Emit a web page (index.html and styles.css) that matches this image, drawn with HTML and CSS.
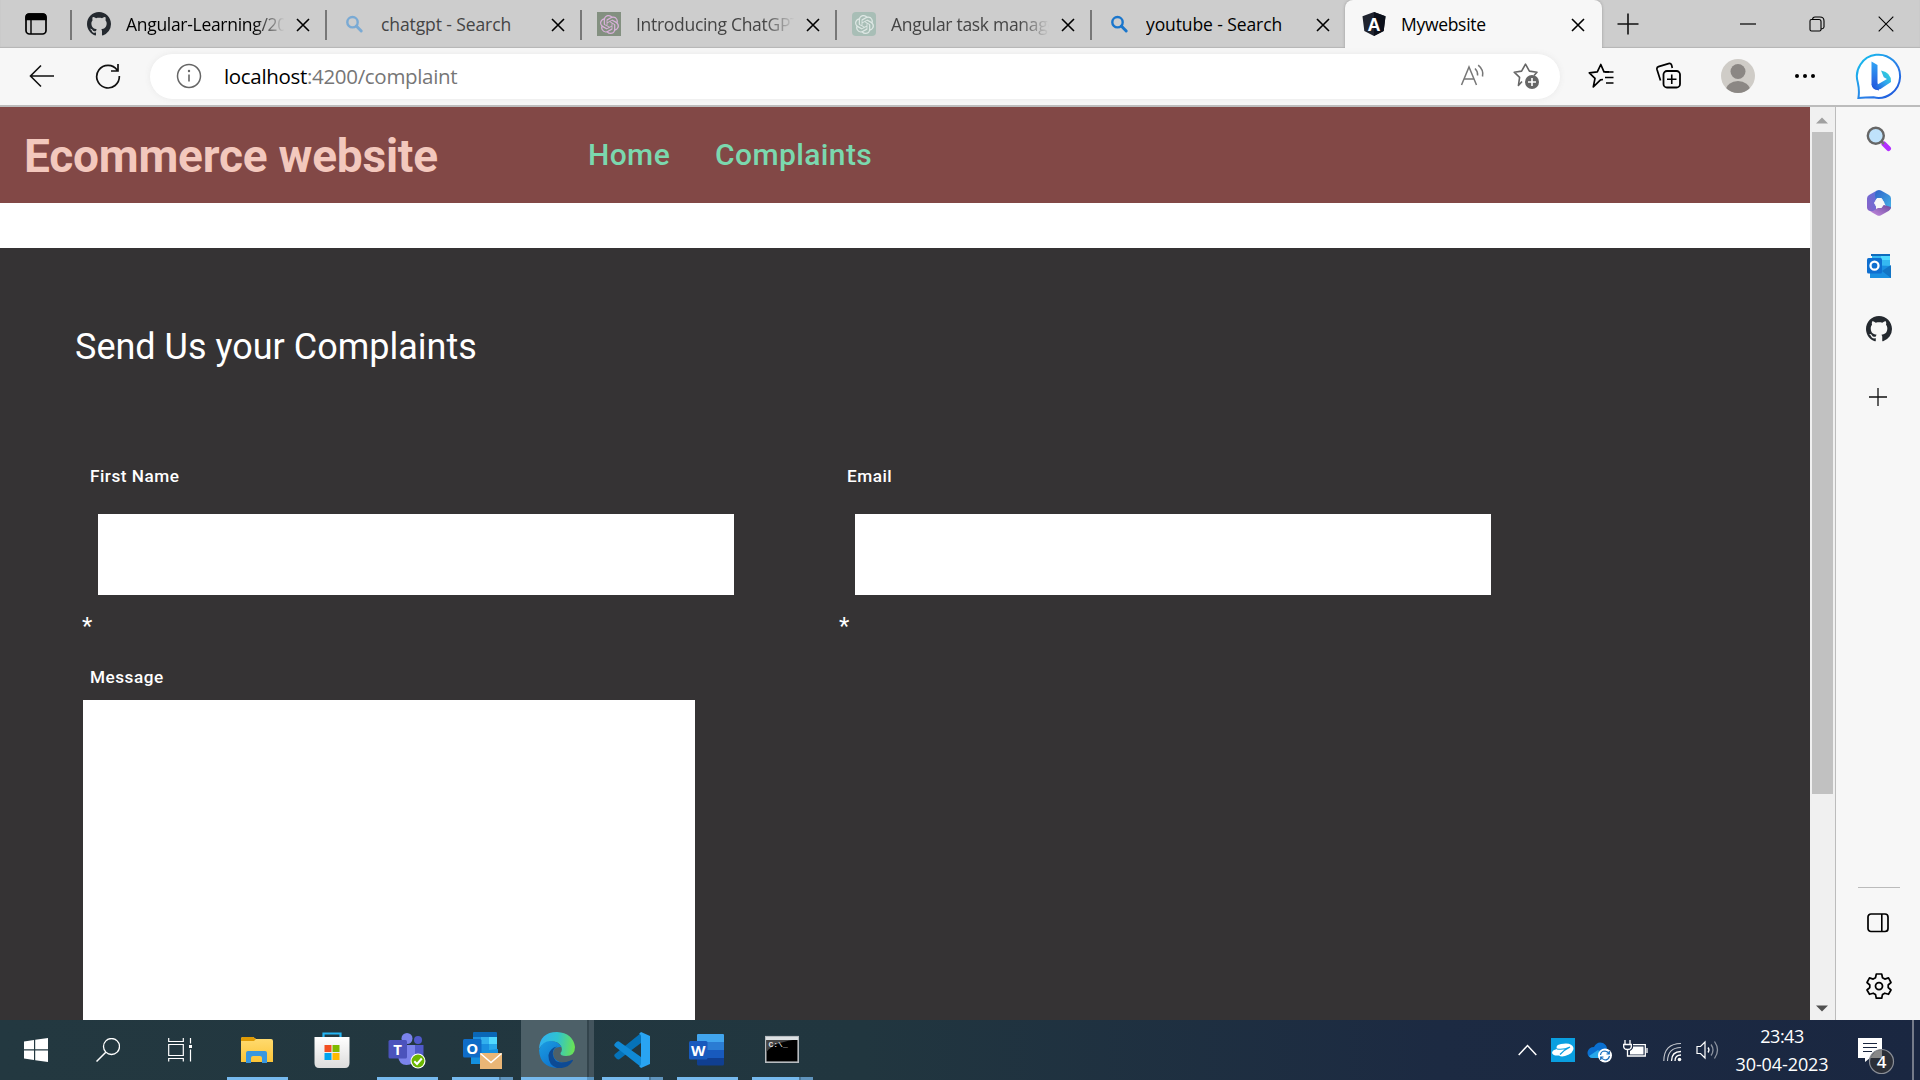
FILE: index.html
```html
<!DOCTYPE html>
<html lang="en">
<head>
<meta charset="utf-8">
<title>Mywebsite</title>
<link rel="stylesheet" href="styles.css">
</head>
<body>
<svg class="defs" width="0" height="0">
  <defs>
    <symbol id="x" viewBox="0 0 14 14"><path d="M1 1L13 13M13 1L1 13" fill="none" stroke="#000" stroke-width="1.6"/></symbol>
    <symbol id="github" viewBox="0 0 16 16"><path d="M8 0C3.58 0 0 3.58 0 8c0 3.54 2.29 6.53 5.47 7.59.4.07.55-.17.55-.38 0-.19-.01-.82-.01-1.49-2.01.37-2.53-.49-2.69-.94-.09-.23-.48-.94-.82-1.13-.28-.15-.68-.52-.01-.53.63-.01 1.08.58 1.23.82.72 1.21 1.87.87 2.33.66.07-.52.28-.87.51-1.07-1.78-.2-3.64-.89-3.64-3.95 0-.87.31-1.59.82-2.15-.08-.2-.36-1.02.08-2.12 0 0 .67-.21 2.2.82.64-.18 1.32-.27 2-.27s1.36.09 2 .27c1.53-1.04 2.2-.82 2.2-.82.44 1.1.16 1.92.08 2.12.51.56.82 1.27.82 2.15 0 3.07-1.87 3.75-3.65 3.95.29.25.54.73.54 1.48 0 1.07-.01 1.93-.01 2.2 0 .21.15.46.55.38A8.01 8.01 0 0 0 16 8c0-4.42-3.58-8-8-8z" fill="#24292f"/></symbol>
    <symbol id="openai" viewBox="0 0 24 24"><path d="M22.2819 9.8211a5.9847 5.9847 0 0 0-.5157-4.9108 6.0462 6.0462 0 0 0-6.5098-2.9A6.0651 6.0651 0 0 0 4.9807 4.1818a5.9847 5.9847 0 0 0-3.9977 2.9 6.0462 6.0462 0 0 0 .7427 7.0966 5.98 5.98 0 0 0 .511 4.9107 6.051 6.051 0 0 0 6.5146 2.9001A5.9847 5.9847 0 0 0 13.2599 24a6.0557 6.0557 0 0 0 5.7718-4.2058 5.9894 5.9894 0 0 0 3.9977-2.9001 6.0557 6.0557 0 0 0-.7475-7.0729zm-9.022 12.6081a4.4755 4.4755 0 0 1-2.8764-1.0408l.1419-.0804 4.7783-2.7582a.7948.7948 0 0 0 .3927-.6813v-6.7369l2.02 1.1686a.071.071 0 0 1 .038.052v5.5826a4.504 4.504 0 0 1-4.4945 4.4944zm-9.6607-4.1254a4.4708 4.4708 0 0 1-.5346-3.0137l.142.0852 4.783 2.7582a.7712.7712 0 0 0 .7806 0l5.8428-3.3685v2.3324a.0804.0804 0 0 1-.0332.0615L9.74 19.9502a4.4992 4.4992 0 0 1-6.1408-1.6464zM2.3408 7.8956a4.485 4.485 0 0 1 2.3655-1.9728V11.6a.7664.7664 0 0 0 .3879.6765l5.8144 3.3543-2.0201 1.1685a.0757.0757 0 0 1-.071 0l-4.8303-2.7865A4.504 4.504 0 0 1 2.3408 7.872zm16.5963 3.8558L13.1038 8.364 15.1192 7.2a.0757.0757 0 0 1 .071 0l4.8303 2.7913a4.4944 4.4944 0 0 1-.6765 8.1042v-5.6772a.79.79 0 0 0-.407-.667zm2.0107-3.0231l-.142-.0852-4.7735-2.7818a.7759.7759 0 0 0-.7854 0L9.409 9.2297V6.8974a.0662.0662 0 0 1 .0284-.0615l4.8303-2.7866a4.4992 4.4992 0 0 1 6.6802 4.66zM8.3065 12.863l-2.02-1.1638a.0804.0804 0 0 1-.038-.0567V6.0742a4.4992 4.4992 0 0 1 7.3757-3.4537l-.142.0805L8.704 5.459a.7948.7948 0 0 0-.3927.6813zm1.0976-2.3654l2.602-1.4998 2.6069 1.4998v2.9994l-2.5974 1.4997-2.6067-1.4997Z" fill="currentColor"/></symbol>
    <symbol id="lens" viewBox="0 0 24 24"><circle cx="10.5" cy="10.2" r="5.2" fill="none" stroke="currentColor" stroke-width="2.4"/><path d="M14.3 14L19.2 19" stroke="currentColor" stroke-width="3" stroke-linecap="round"/></symbol>
    <linearGradient id="bingRing" x1="0" y1="0" x2="1" y2="1"><stop offset="0" stop-color="#15c5ee"/><stop offset=".6" stop-color="#2b7de8"/><stop offset="1" stop-color="#1a4fd8"/></linearGradient>
    <linearGradient id="bingB" x1="0" y1="0" x2="0" y2="1"><stop offset="0" stop-color="#30a5f5"/><stop offset="1" stop-color="#2450dc"/></linearGradient>
    <linearGradient id="bingTail" x1="0" y1="1" x2="1" y2="0"><stop offset="0" stop-color="#1d45d6"/><stop offset=".55" stop-color="#30a8ee"/><stop offset="1" stop-color="#2fe0d0"/></linearGradient>
    <linearGradient id="mA" x1="0" y1="1" x2="1" y2="0"><stop offset="0" stop-color="#8b62c8"/><stop offset="1" stop-color="#5a72dc"/></linearGradient>
    <linearGradient id="mB" x1="0" y1="0" x2="1" y2="1"><stop offset="0" stop-color="#2f62c8"/><stop offset="1" stop-color="#46b5e8"/></linearGradient>
    <linearGradient id="mC" x1="0" y1="1" x2="1" y2="0"><stop offset="0" stop-color="#c78ce0"/><stop offset="1" stop-color="#6b4aa0"/></linearGradient>
    <linearGradient id="edgeTop" x1="0" y1=".4" x2="1" y2=".5"><stop offset="0" stop-color="#30b0f2"/><stop offset=".5" stop-color="#2fc3cf"/><stop offset="1" stop-color="#6be352"/></linearGradient>
    <linearGradient id="edgeLow" x1="0" y1="0" x2="1" y2="1"><stop offset="0" stop-color="#1b9de2"/><stop offset="1" stop-color="#0a63c4"/></linearGradient>
    <linearGradient id="folder" x1="0" y1="0" x2="0" y2="1"><stop offset="0" stop-color="#ffdc73"/><stop offset="1" stop-color="#fcc537"/></linearGradient>
    <linearGradient id="bag" x1="0" y1="0" x2="0" y2="1"><stop offset="0" stop-color="#fff"/><stop offset="1" stop-color="#dcdcdc"/></linearGradient>
  </defs>
</svg>

<header class="tabstrip">
  <div class="tab-actions">
    <svg width="22" height="22" viewBox="0 0 22 22"><rect x="1" y="1" width="20" height="20" rx="3.5" fill="none" stroke="#000" stroke-width="1.7"/><path d="M1 6.5V4Q1 1 4 1H18Q21 1 21 4V6.5ZM6 6V21" stroke="#000" stroke-width="1.4"/></svg>
  </div>
  <div class="tab"><svg class="fav"><use href="#github"/></svg><span class="title fade">Angular-Learning/20</span><svg class="close"><use href="#x"/></svg></div>
  <div class="tab dim"><svg class="fav pale"><use href="#lens"/></svg><span class="title wide">chatgpt - Search</span><svg class="close"><use href="#x"/></svg></div>
  <div class="tab dim"><span class="fav tile green"><svg width="19" height="19"><use href="#openai"/></svg></span><span class="title fade">Introducing ChatGPT</span><svg class="close"><use href="#x"/></svg></div>
  <div class="tab dim"><span class="fav tile mint"><svg width="19" height="19"><use href="#openai"/></svg></span><span class="title fade">Angular task manager</span><svg class="close"><use href="#x"/></svg></div>
  <div class="tab"><svg class="fav blue"><use href="#lens"/></svg><span class="title wide">youtube - Search</span><svg class="close"><use href="#x"/></svg></div>
  <div class="tab active"><svg class="fav" viewBox="0 0 24 24"><path d="M12 0L23.5 4.2L21.7 19L12 24L2.3 19L.5 4.2Z" fill="#20242f"/><path d="M12 0L23.5 4.2L21.7 19L12 24Z" fill="#0c101b"/><text class="ang" x="12" y="18.5" text-anchor="middle">A</text></svg><span class="title">Mywebsite</span><svg class="close"><use href="#x"/></svg></div>
  <svg class="newtab" width="22" height="22" viewBox="0 0 22 22"><path d="M11 .5V21.5M.5 11H21.5" stroke="#111" stroke-width="1.6"/></svg>
  <div class="winbtns">
    <svg width="16" height="16"><path d="M0 8H16" stroke="#000" stroke-width="1.2"/></svg>
    <svg width="16" height="16"><path d="M1 5Q1 3.5 2.5 3.5H10Q12 3.5 12 5.5V13.5Q12 15 10.5 15H2.5Q1 15 1 13.5ZM3.5 3.5Q3.7 1 6 1H11Q15 1 15 5V11Q15 12.5 12.5 13" fill="none" stroke="#000" stroke-width="1.1"/></svg>
    <svg width="16" height="16"><path d="M.7.7L15.3 15.3M15.3.7L.7 15.3" stroke="#000" stroke-width="1.1"/></svg>
  </div>
</header>

<div class="toolbar">
  <svg class="back" width="26" height="24" viewBox="0 0 26 24"><path d="M25 12H1.5M12 1.5L1.5 12L12 22.5" fill="none" stroke="#111" stroke-width="1.6"/></svg>
  <svg class="reload" width="26" height="26" viewBox="0 0 26 26"><path d="M22.3 7.2A11.3 11.3 0 1 0 24.3 13M23 1V8H16" fill="none" stroke="#111" stroke-width="1.7"/></svg>
  <div class="address">
    <svg width="26" height="26" viewBox="0 0 26 26"><circle cx="13" cy="13" r="11.5" fill="none" stroke="#666" stroke-width="1.5"/><path d="M13 11.5V18.5" stroke="#666" stroke-width="1.6"/><circle cx="13" cy="8" r="1.2" fill="#666"/></svg>
    <span class="url"><b>localhost</b>:4200/complaint</span>
    <svg class="read" width="26" height="26" viewBox="0 0 26 26"><path d="M1.5 22L9 4L16.5 22M4.2 16H13.8" fill="none" stroke="#777" stroke-width="1.5"/><path d="M15 5.5Q18 8.5 17.6 12.5M18.2 2.2Q24 7 22.5 13.5" fill="none" stroke="#777" stroke-width="1.5"/></svg>
    <svg class="addfav" width="28" height="28" viewBox="0 0 28 28"><path d="M9 19.5L5.4 23.5L6.6 15.4L1.2 10.2L8.6 9.1L12.5 2.2L16.4 9.1L24 10.2L21 13.5" fill="none" stroke="#666" stroke-width="1.6" stroke-linejoin="round"/><circle cx="19" cy="20" r="7" fill="#666"/><path d="M19 16V24M15 20H23" stroke="#fff" stroke-width="1.6"/></svg>
  </div>
  <div class="tools">
    <svg width="28" height="26" viewBox="0 0 28 26"><path d="M15 16.5L12.5 16.8L5.3 23.8L7 15.4L1.3 9.8L9.3 8.8L12.8 1.5L16 8.8H21" fill="none" stroke="#000" stroke-width="1.7" stroke-linejoin="round"/><path d="M17 9H25.5M17 14.5H25.5M18 20H25.5" stroke="#000" stroke-width="1.7"/></svg>
    <svg width="28" height="28" viewBox="0 0 28 28"><path d="M5.5 18.5L2 7.5Q1.5 5.3 3.5 4.6L13.5 1.6Q15.8 1 16.6 3L17.3 6" fill="none" stroke="#000" stroke-width="1.7"/><rect x="8.5" y="9" width="16.5" height="16.5" rx="3.5" fill="#f7f7f7" stroke="#000" stroke-width="1.8"/><path d="M16.75 12.5V22M12 17.25H21.5" stroke="#000" stroke-width="1.6"/></svg>
    <svg width="34" height="34" viewBox="0 0 34 34"><clipPath id="av"><circle cx="17" cy="17" r="17"/></clipPath><circle cx="17" cy="17" r="17" fill="#cfccc7"/><g clip-path="url(#av)" fill="#8b8784"><circle cx="17" cy="12.5" r="7.5"/><ellipse cx="17" cy="31" rx="12" ry="9"/></g></svg>
    <svg width="22" height="6"><circle cx="3" cy="3" r="2" /><circle cx="11" cy="3" r="2"/><circle cx="19" cy="3" r="2"/></svg>
  </div>
  <svg class="bing" width="48" height="50" viewBox="0 0 48 50"><path d="M3.4 45Q4.7 38 2.8 29.5A21.6 21.6 0 1 1 18.5 44.3Q10 44.5 3.4 45Z" fill="#fff" stroke="url(#bingRing)" stroke-width="2"/><path d="M16.5 8.5L22.5 12V29.5L24 37.5Q16.5 36 16.5 31Z" fill="url(#bingB)"/><path d="M16.5 31Q18 39 25.5 36L36 29Q36.5 19.5 26 17.5L28.8 24.3L32 26L20 33Z" fill="url(#bingTail)"/></svg>
</div>

<div class="window">
  <main class="page">
    <nav class="site-nav">
      <h1 class="brand">Ecommerce website</h1>
      <a class="home">Home</a>
      <a class="complaints">Complaints</a>
    </nav>
    <section class="complaint">
      <h2 class="heading">Send Us your Complaints</h2>
      <form class="form">
        <div class="field"><label>First Name</label><div class="input"></div><span class="star">*</span></div>
        <div class="field"><label>Email</label><div class="input"></div><span class="star">*</span></div>
        <div class="field message"><label>Message</label><div class="area"></div></div>
      </form>
    </section>
  </main>
  <div class="scrollbar">
    <svg width="12" height="7"><path d="M0 6.5L6 .5L12 6.5Z" fill="#a0a0a0"/></svg>
    <div class="thumb"></div>
    <svg class="down" width="12" height="7"><path d="M0 .5L6 6.5L12 .5Z" fill="#505050"/></svg>
  </div>
  <aside class="sidebar">
    <svg width="26" height="26" viewBox="0 0 26 26"><path d="M18 18L22.500 22.500" stroke="#b32fff" stroke-width="5" stroke-linecap="round"/><path d="M15 15L18 18" stroke="#777" stroke-width="2.5"/><circle cx="9.8" cy="9.8" r="8" fill="#bfe2fb" stroke="#666" stroke-width="2.4"/></svg>
    <svg width="26" height="28" viewBox="0 0 26 28"><path d="M11 1.5L3 6Q1 7.200 1 9.500V18.500Q1 22 6 22.300L10 21.500V12Z" fill="url(#mA)"/><path d="M11 1.500Q13 .5 15 1.500L23 6Q25 7.200 25 9.500V18Q25 20.500 22 21L17.500 12.500L10 12L9 6Q9 2.500 11 1.500Z" fill="url(#mB)"/><path d="M25 18Q25 20.500 23 21.700L15 26.300Q13 27.300 11 26.300L4 22.300Q8 22.600 10 20L18 16Z" fill="url(#mC)"/><path d="M11 9.500H15.500L18 14L15.500 18.500H11L8.500 14Z" fill="#f7f7f7" stroke="#f7f7f7" stroke-linejoin="round"/></svg>
    <svg width="26" height="26" viewBox="0 0 26 26"><path d="M6 1H24V13H6Z" fill="#35b8f1"/><path d="M15 1H24V7H15Z" fill="#50d9ff"/><path d="M5 1H24V3H5Z" fill="#0f6cbd"/><path d="M4 12L25 13V25H4Z" fill="#1a8fe0"/><path d="M16 18L25 12V25Z" fill="#1274c4"/><rect x="1" y="5" width="15" height="15.500" rx="1.5" fill="#0f6fd0"/><circle cx="8.500" cy="12.700" r="4" fill="none" stroke="#fff" stroke-width="2.300"/></svg>
    <svg width="26" height="26"><use href="#github"/></svg>
    <svg class="plus" width="20" height="20"><path d="M10 1V19M1 10H19" stroke="#111" stroke-width="1.3"/></svg>
    <div class="rule"></div>
    <svg class="panel" width="22" height="20" viewBox="0 0 22 20"><rect x="1" y="1" width="20" height="17.500" rx="3" fill="none" stroke="#000" stroke-width="1.7"/><path d="M14.800 1V18.500" stroke="#000" stroke-width="1.600"/></svg>
    <svg width="28" height="28" viewBox="0 0 28 28"><path d="M11.300 2H16.700L17.500 5.800L19.800 7.100L23.500 5.900L26 10.500L23.200 13L23.200 15.500L26 18L23.500 22.300L19.800 21.200L17.500 22.500L16.700 26.200H11.300L10.500 22.500L8.200 21.200L4.500 22.300L2 18L4.800 15.500V13L2 10.500L4.500 5.900L8.200 7.100L10.500 5.800Z" fill="none" stroke="#000" stroke-width="1.700" stroke-linejoin="round"/><circle cx="14" cy="14.100" r="3.500" fill="none" stroke="#000" stroke-width="1.800"/></svg>
  </aside>
</div>

<footer class="taskbar">
  <div class="sys"><svg width="24" height="24"><path d="M0 3.500L10 2V11.300H0ZM11.200 1.800L24 0V11.300H11.200ZM0 12.500H10V22L0 20.500ZM11.200 12.500H24V24L11.200 22.200Z" fill="#fff"/></svg></div>
  <div class="sys"><svg width="24" height="24"><circle cx="15.500" cy="8.500" r="8" fill="none" stroke="#fff" stroke-width="1.300"/><path d="M9.800 14.200L.5 23.500" stroke="#fff" stroke-width="1.500"/></svg></div>
  <div class="sys"><svg width="24" height="24"><path d="M.7 0V3.500H15.300V0M.7 6.500H15.300V17.500H.7ZM.7 23.500V20.500H15.300V23.500M22.500 0V5.500M22.500 11.500V23.500" fill="none" stroke="#fff" stroke-width="1.200"/><path d="M21 7H24V10H21Z" fill="#fff"/></svg></div>
  <div class="apps">
    <div class="app run"><svg width="36" height="36"><path d="M2 7Q2 5 4 5H14L17 7H32Q34 7 34 9V30H2Z" fill="url(#folder)"/><path d="M2 9V7Q2 5 4 5H14L17 7L15 9Z" fill="#df9b05"/><path d="M7 31V21Q7 19 9 19H26Q28 19 28 21V31H23V26Q23 24 21 24H14Q12 24 12 26V31Z" fill="#3897e0"/></svg></div>
    <div class="app"><svg width="36" height="36"><path d="M9.500 7V1.500H26.500V7" fill="none" stroke="#25b5f3" stroke-width="2.200"/><path d="M.5 5H35.500V31Q35.500 36 31 36H5Q.5 36 .5 31Z" fill="url(#bag)"/><path d="M10.500 13H17.500V20H10.500Z" fill="#f25022"/><path d="M18.500 13H25.500V20H18.500Z" fill="#7fba00"/><path d="M10.500 21H17.500V28H10.500Z" fill="#00a4ef"/><path d="M18.500 21H25.500V28H18.500Z" fill="#ffb900"/></svg></div>
    <div class="app run"><svg width="38" height="38"><circle cx="19" cy="7.500" r="5.500" fill="#7b83eb"/><circle cx="30" cy="9" r="4" fill="#5059c9"/><path d="M23 14H35.500V23Q35 30 29 30H23Z" fill="#5059c9"/><path d="M10 14H27V25Q26 34 18.500 34Q11 34 10 25Z" fill="#7b83eb"/><rect x=".5" y="9" width="18.500" height="18.500" rx="1.500" fill="#4b53bc"/><text class="ico" x="9.700" y="23.500" text-anchor="middle">T</text><circle cx="30" cy="30" r="7.500" fill="#fff"/><circle cx="30" cy="30" r="6.400" fill="#6bb700"/><path d="M26.300 30.300L29 33L33.800 27.500" fill="none" stroke="#fff" stroke-width="2"/></svg></div>
    <div class="app run multi"><svg width="40" height="40"><path d="M11 3Q11 2 12 2H34Q35 2 35 3V17H11Z" fill="#0a67b7"/><path d="M11 7H35V24H11Z" fill="#1a8fe0"/><path d="M19 7H27V14H19Z" fill="#32b0ee"/><path d="M27 7H35V14H27Z" fill="#50d9ff"/><path d="M27 14H35V22H27Z" fill="#28a8ea"/><path d="M9 22L36 19V34H9Z" fill="#1490df"/><rect x="1" y="9" width="18.500" height="18.500" rx="1.500" fill="#0f6cc7"/><text class="ico" x="10.200" y="24" text-anchor="middle">O</text><path d="M18 23H40V39H18Z" fill="#eab676"/><path d="M18.500 23.500L29 32.500L39.500 23.500" fill="none" stroke="#fff" stroke-width="1.500"/></svg></div>
    <div class="app run multi current"><svg width="36" height="36"><path d="M0 17Q1 0 18 0Q34 1 36 15Q36 24 27 24Q21 24 21.500 21Q24 18 22 14Q17 7 7 11Q2 13 0 17Z" fill="url(#edgeTop)"/><path d="M0 18Q3 9 12 9Q19 9 22.500 15Q14 14 14 22Q15 30 25 31Q30 31 33 28Q29 36 18 36Q1 35 0 18Z" fill="url(#edgeLow)"/><path d="M18 14.500Q13 17 14 23Q16 35 33 28Q35 27 33 30Q28 37 18 36Q9 33 9.500 23Q11 16 18 14.500Z" fill="#0d4a94"/></svg></div>
    <div class="app run multi"><svg width="36" height="36"><path d="M27 1V11L5 27.500Q3.500 28 1 25Q-.5 23.500 1 22Z" fill="#0572b8"/><path d="M27 35V25L5 9.500Q3.500 8.500 1 11.500Q-.5 13 1 14.500Z" fill="#1089d5"/><path d="M27 0L36 4V32L27 36L25 34Q27 34 27 31V5Q27 2 25 2Z" fill="#29a4f2"/></svg></div>
    <div class="app run"><svg width="36" height="36"><path d="M8 3Q8 2 9 2H34Q35 2 35 3V11H8Z" fill="#41a5ee"/><path d="M8 10H35V18H8Z" fill="#2b7cd3"/><path d="M8 18H35V26H8Z" fill="#185abd"/><path d="M8 26H35V32Q35 33.500 33.500 33.500H9Q8 33 8 32Z" fill="#103f91"/><rect x="0" y="9" width="18.500" height="18.500" rx="1.500" fill="#185abd"/><text class="ico" x="9.200" y="23.700" text-anchor="middle">W</text></svg></div>
    <div class="app run multi"><svg width="34" height="36"><rect x=".7" y="4.700" width="32.500" height="25.500" fill="#000" stroke="#b8bcc0" stroke-width="1.600"/><path d="M1 5H33V8H1Z" fill="#dde1e4"/><path d="M1.500 8H28Q8 11 1.500 20Z" fill="#444"/><text class="cmd" x="3.500" y="14.500">C:\_</text></svg></div>
  </div>
  <div class="tray">
    <svg class="chev" width="19" height="12"><path d="M.7 11L9.500 1.500L18.300 11" fill="none" stroke="#fff" stroke-width="1.500"/></svg>
    <svg class="zs" width="24" height="24"><path d="M0 0H24V24H0Z" fill="#0a9fe0"/><path d="M1 15Q1 12 6 11Q4 7 10 6Q21 4 22.500 10Q23 15 14 18Q10 19 8 17.500Q2 18 1 15Z" fill="#fff"/><path d="M6 11Q13 12 19 9Q13 12 9 16.500" fill="none" stroke="#0a9fe0" stroke-width="1.200"/></svg>
    <svg class="od" width="26" height="22"><path d="M5 17Q0 16 .5 11Q2 6 7 6Q10 0 16 2Q20 4 20 8L22 17Z" fill="#0a6fd0"/><path d="M2 15L11 9L20 17H5Q3 17 2 15Z" fill="#28a8ea"/><circle cx="18" cy="14.500" r="7" fill="#fff"/><path d="M13.500 14Q14 10 18 10Q21 10.500 22 13M22.500 15Q21.500 19 18 19Q15 18.500 14 16M22.300 10V13H19.500M13.700 19V16H16.500" fill="none" stroke="#176dbd" stroke-width="1.200"/></svg>
    <svg class="bat" width="25" height="20"><path d="M2 0V4M7 0V4M.7 4.500H8.300V7Q8 9.500 4.500 9.500Q1 9.500 .7 7ZM4.500 9.500V16H9M10 4.700H22.300V16H9M24 8V13" fill="none" stroke="#fff" stroke-width="1.300"/><path d="M10 6.500H20.500V14.500H7V11Q9 10 10 8Z" fill="#fff"/></svg>
    <svg class="wifi" width="20" height="20"><circle cx="16.500" cy="17.500" r="1.800" fill="#fff"/><path d="M12 19Q12 13 18 13M8.500 19Q8.500 9.500 18 9.500" fill="none" stroke="#fff" stroke-width="1.300"/><path d="M4.500 19Q5 5.500 18 5.500M.8 19Q1 1.500 18 1.500" fill="none" stroke="#fff" stroke-width="1.100" opacity=".75"/></svg>
    <svg class="vol" width="24" height="20"><path d="M1 6.500H4.500L9 2V18L4.500 13.500H1Z" fill="none" stroke="#fff" stroke-width="1.200"/><path d="M12 7.500Q14 10 12 12.500" fill="none" stroke="#fff" stroke-width="1.300"/><path d="M15 4.500Q19 10 15 15.500M18.500 1.500Q24.500 10 18.500 18.500" fill="none" stroke="#fff" stroke-width="1.300" opacity=".5"/></svg>
    <div class="clock"><span class="time">23:43</span><span class="date">30-04-2023</span></div>
    <svg class="note" width="38" height="38" viewBox="0 0 38 38"><path d="M0 0H24V20H12L7 24V20H0Z" fill="#fff"/><path d="M5 5.500H19M5 9.500H19M5 13.500H14" stroke="#1b2740" stroke-width="1.200"/><circle cx="23.500" cy="23.500" r="12" fill="#2b2f38" stroke="#8b8f97" stroke-width="1.200"/><path d="M12 20L17.500 13.300Q21 11.700 24 12V20Z" fill="#888"/><text class="badge" x="23.500" y="29.500" text-anchor="middle">4</text></svg>
    <div class="show"></div>
  </div>
</footer>
</body>
</html>
```
FILE: styles.css
```css
* { box-sizing: border-box; }
body {
  margin: 0;
  width: 1920px;
  height: 1080px;
  overflow: hidden;
  display: flex;
  flex-direction: column;
  font-family: "Open Sans", "Noto Sans", sans-serif;
  background: #f7f7f7;
}
svg { display: block; flex: none; }
.defs { position: absolute; }

/* Tab strip */
.tabstrip { height: 48px; flex: none; display: flex; align-items: center; background: #cdcdcd; box-shadow: inset 0 -1px 1px #b5b5b5; }
.tab-actions { width: 70px; padding-left: 25px; }
.tab { width: 255px; height: 48px; display: flex; align-items: center; padding-left: 15px; background: linear-gradient(#777, #777) 0 10px / 2px 30px no-repeat; }
.fav { width: 24px; height: 24px; margin: 0 15px 0 2px; flex: none; }
.tile { display: flex; align-items: center; justify-content: center; }
.green { background: #839080; color: #d9b1da; }
.mint { background: #a8beb6; color: #dfe8e5; border-radius: 4px; }
.pale { color: #7aaad4; }
.blue { color: #1a76cc; }
.title { width: 160px; font-size: 17.5px; line-height: 24px; letter-spacing: -0.3px; white-space: nowrap; overflow: hidden; color: #000; }
.title.wide { letter-spacing: -0.1px; }
.dim .title { color: #444; }
.fade { -webkit-mask-image: linear-gradient(90deg, #000 80%, transparent 99%); mask-image: linear-gradient(90deg, #000 80%, transparent 99%); }
.close { width: 14px; height: 14px; margin-left: 10px; margin-top: 2px; }
.tab.active { width: 257px; background: #f7f7f7; border-radius: 8px 8px 0 0; box-shadow: 0 0 3px #999; clip-path: inset(0 -4px 0 -4px); }
.ang { font: bold 18px "Liberation Sans", sans-serif; fill: #fff; }
.newtab { margin-left: 15px; }
.winbtns { margin-left: auto; margin-right: 26px; display: flex; gap: 53px; }

/* Toolbar */
.toolbar { height: 59px; flex: none; display: flex; align-items: center; padding-bottom: 2px; border-bottom: 2px solid #bcbcbc; background: #f7f7f7; }
.back { margin-left: 29px; }
.reload { margin-left: 40px; }
.address { width: 1410px; height: 45px; margin-left: 29px; margin-top: 1px; border-radius: 23px; background: #fff; box-shadow: 0 0 6px #e8e8e8; display: flex; align-items: center; padding-left: 26px; }
.url { margin-left: 22px; font-size: 20.5px; line-height: 28px; letter-spacing: -0.32px; color: #767676; white-space: nowrap; }
.url b { font-weight: 400; color: #000; }
.read { margin-left: auto; }
.addfav { margin: 0 19px 0 27px; }
.tools { display: flex; align-items: center; margin-left: 28px; width: 228px; justify-content: space-between; }
.bing { margin: 4px 0 0 39px; }

/* Page */
.window { flex: 1; min-height: 0; display: flex; }
.page { width: 1810px; overflow: hidden; background: #fff; font-family: Roboto, "Open Sans", sans-serif; }
.site-nav { height: 96px; background: #824846; display: flex; align-items: center; padding-left: 24px; white-space: nowrap; }
.brand { margin: 0; width: 564px; font-size: 46px; line-height: 56px; font-weight: 700; letter-spacing: -0.2px; color: #f3c8bd; padding-top: 1px; }
.site-nav a { font-size: 30px; line-height: 36px; font-weight: 500; letter-spacing: 0.4px; color: #7bd8ae; }
.home { width: 127px; }
.complaint { margin-top: 45px; height: 772px; background: #353334; color: #fff; padding: 75px 0 0 75px; }
.heading { margin: 0; font-size: 36px; line-height: 48px; font-weight: 400; }
.form { margin: 95px 0 0 7px; display: grid; grid-template-columns: 757px 757px; grid-template-rows: 201px auto; }
.field { display: flex; flex-direction: column; }
.field label { padding-left: 8px; font-size: 17.2px; line-height: 20px; font-weight: 500; letter-spacing: 0.5px; }
.input { width: 636px; height: 81px; margin: 28px 0 0 16px; background: #fff; }
.star { font-size: 24px; line-height: 24px; margin-top: 19px; }
.area { width: 612px; height: 400px; margin: 13px 0 0 1px; background: #fff; }

.scrollbar { width: 26px; background: #f0f0f0; border-right: 1px solid #bcbcbc; display: flex; flex-direction: column; align-items: center; padding: 10px 1px 8px 0; }
.thumb { width: 21px; height: 662px; margin-top: 8px; background: #c1c1c1; }
.down { margin-top: auto; }
.sidebar { width: 84px; background: #f7f7f7; display: flex; flex-direction: column; align-items: center; padding: 19px 0 20px 2px; }
.sidebar svg:nth-child(2) { margin-top: 37px; }
.sidebar svg:nth-child(3) { margin-top: 36px; }
.sidebar svg:nth-child(4) { margin-top: 37px; }
.sidebar .plus { margin-top: 45px; margin-right: 3px; }
.rule { width: 42px; height: 1px; background: #bbb; margin-top: auto; }
.panel { margin: 25px 2px 39px 0; }

/* Taskbar */
.taskbar { height: 60px; flex: none; display: flex; background: linear-gradient(90deg, #233840 0, #21363f 45%, #1c2a42 75%, #1a2741 100%); color: #fff; }
.sys { width: 72px; display: flex; align-items: center; justify-content: center; }
.apps { display: flex; padding-left: 4px; }
.app { width: 75px; height: 60px; display: flex; align-items: center; justify-content: center; padding-right: 2px; }
.run { background: linear-gradient(#76b9ed, #76b9ed) 7px 57px / 61px 3px no-repeat; }
.multi { background: linear-gradient(90deg, #76b9ed 47px, #4c7899 47px, #4c7899 49px, #6094bd 49px) 7px 57px / 61px 3px no-repeat; }
.current { margin-left: 1px; width: 73px; margin-right: 1px; background: linear-gradient(90deg, #76b9ed 66px, #5a94c0 66px) 0 57px / 73px 3px no-repeat, linear-gradient(90deg, #4d6068 66px, #33444c 66px, #33444c 68px, #43545d 68px); }
.ico { font: bold 15px "Open Sans", sans-serif; fill: #fff; }
.cmd { font: bold 8px "Liberation Mono", monospace; fill: #ddd; }
.tray { margin-left: auto; display: flex; align-items: center; }
.zs { margin-left: 14px; }
.od { margin: 3px 0 0 12px; }
.bat { margin-left: 10px; }
.wifi { margin: 3px 0 0 15px; }
.vol { margin-left: 13px; }
.clock { width: 96px; margin-left: 14px; display: flex; flex-direction: column; align-items: center; font-size: 18px; line-height: 28px; white-space: nowrap; }
.time { letter-spacing: -0.5px; }
.date { letter-spacing: -0.1px; }
.note { margin: 14px 0 0 28px; }
.badge { font: 600 17px "Open Sans", sans-serif; fill: #fff; }
.show { width: 2px; height: 60px; margin: 0 6px 0 16px; background: #747b89; }
```
